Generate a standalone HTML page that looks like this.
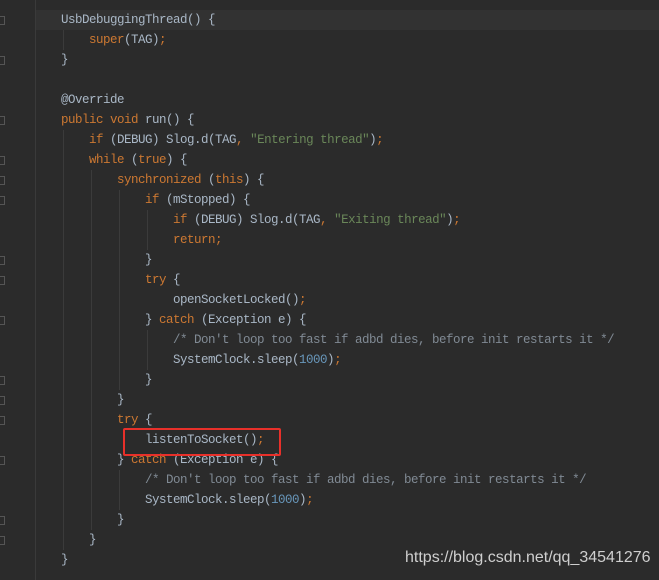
<!DOCTYPE html><html><head><style>
body{margin:0;width:659px;height:580px;background:#2b2b2b;overflow:hidden;position:relative;font-family:"Liberation Mono",monospace;}
.gut{position:absolute;left:35px;top:0;width:1px;height:580px;background:#3a3a3a}
.hl{position:absolute;left:36px;top:10px;width:623px;height:20px;background:#323232}
.l{position:absolute;height:20px;line-height:20px;font-size:12.5px;letter-spacing:-0.5px;color:#a9b7c6;white-space:pre}
.k{color:#cc7832}.s{color:#6a8759}.c{color:#808a94}.n{color:#6897bb}
.g{position:absolute;width:1px;background:#3b3b3b}
.box{position:absolute;left:123px;top:428px;width:154px;height:24px;border:2px solid #e8302a;border-radius:2px}
.wm{position:absolute;left:405px;top:549px;font-family:"Liberation Sans",sans-serif;font-size:16px;color:#cfcfcf}
.f{position:absolute;left:0;width:4px;height:7px;border:1px solid #555;border-left:none}
</style></head><body>
<div class="gut"></div><div class="hl"></div>
<div class="g" style="left:63px;top:30px;height:20px"></div>
<div class="g" style="left:63px;top:130px;height:420px"></div>
<div class="g" style="left:91px;top:170px;height:360px"></div>
<div class="g" style="left:119px;top:190px;height:200px"></div>
<div class="g" style="left:147px;top:210px;height:40px"></div>
<div class="g" style="left:147px;top:330px;height:40px"></div>
<div class="g" style="left:119px;top:470px;height:40px"></div>
<div class="f" style="top:16px"></div><div class="f" style="top:56px"></div><div class="f" style="top:116px"></div><div class="f" style="top:156px"></div><div class="f" style="top:176px"></div><div class="f" style="top:196px"></div><div class="f" style="top:256px"></div><div class="f" style="top:276px"></div><div class="f" style="top:316px"></div><div class="f" style="top:376px"></div><div class="f" style="top:396px"></div><div class="f" style="top:416px"></div><div class="f" style="top:456px"></div><div class="f" style="top:516px"></div><div class="f" style="top:536px"></div>
<div class="l" style="left:61px;top:10px">UsbDebuggingThread() {</div>
<div class="l" style="left:89px;top:30px"><span class="k">super</span>(TAG)<span class="k">;</span></div>
<div class="l" style="left:61px;top:50px">}</div>
<div class="l" style="left:61px;top:90px">@Override</div>
<div class="l" style="left:61px;top:110px"><span class="k">public void</span> run() {</div>
<div class="l" style="left:89px;top:130px"><span class="k">if</span> (DEBUG) Slog.d(TAG<span class="k">,</span> <span class="s">"Entering thread"</span>)<span class="k">;</span></div>
<div class="l" style="left:89px;top:150px"><span class="k">while</span> (<span class="k">true</span>) {</div>
<div class="l" style="left:117px;top:170px"><span class="k">synchronized</span> (<span class="k">this</span>) {</div>
<div class="l" style="left:145px;top:190px"><span class="k">if</span> (mStopped) {</div>
<div class="l" style="left:173px;top:210px"><span class="k">if</span> (DEBUG) Slog.d(TAG<span class="k">,</span> <span class="s">"Exiting thread"</span>)<span class="k">;</span></div>
<div class="l" style="left:173px;top:230px"><span class="k">return;</span></div>
<div class="l" style="left:145px;top:250px">}</div>
<div class="l" style="left:145px;top:270px"><span class="k">try</span> {</div>
<div class="l" style="left:173px;top:290px">openSocketLocked()<span class="k">;</span></div>
<div class="l" style="left:145px;top:310px">} <span class="k">catch</span> (Exception e) {</div>
<div class="l" style="left:173px;top:330px"><span class="c">/* Don't loop too fast if adbd dies, before init restarts it */</span></div>
<div class="l" style="left:173px;top:350px">SystemClock.sleep(<span class="n">1000</span>)<span class="k">;</span></div>
<div class="l" style="left:145px;top:370px">}</div>
<div class="l" style="left:117px;top:390px">}</div>
<div class="l" style="left:117px;top:410px"><span class="k">try</span> {</div>
<div class="l" style="left:145px;top:430px">listenToSocket()<span class="k">;</span></div>
<div class="l" style="left:117px;top:450px">} <span class="k">catch</span> (Exception e) {</div>
<div class="l" style="left:145px;top:470px"><span class="c">/* Don't loop too fast if adbd dies, before init restarts it */</span></div>
<div class="l" style="left:145px;top:490px">SystemClock.sleep(<span class="n">1000</span>)<span class="k">;</span></div>
<div class="l" style="left:117px;top:510px">}</div>
<div class="l" style="left:89px;top:530px">}</div>
<div class="l" style="left:61px;top:550px">}</div>
<div class="box"></div>
<div class="wm">https://blog.csdn.net/qq_34541276</div>
</body></html>
